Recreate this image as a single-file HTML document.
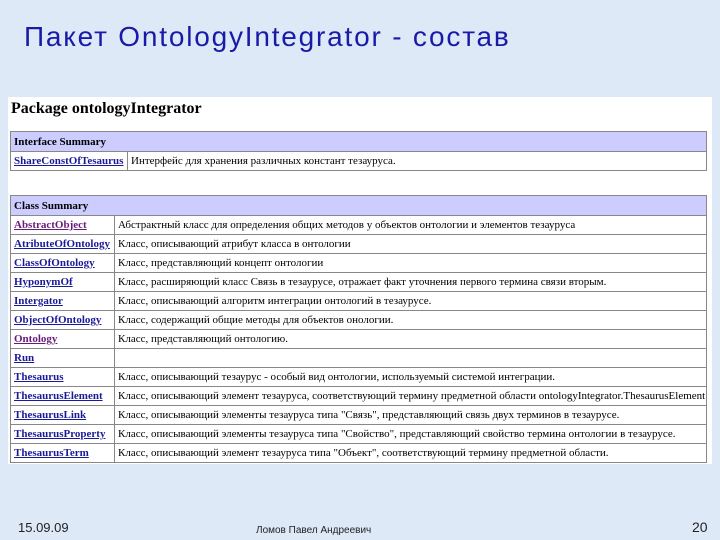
<!DOCTYPE html>
<html><head><meta charset="utf-8"><style>
body{margin:0;width:720px;height:540px;background:#dde9f7;position:relative;overflow:hidden;font-family:"Liberation Serif",serif}
.t{position:absolute;left:24px;top:21px;font:28px "Liberation Sans",sans-serif;letter-spacing:1.8px;color:#1a1aa8;white-space:nowrap}
.box{position:absolute;left:8px;top:97px;width:704px;height:367px;background:#fff}
h1{position:absolute;left:11px;top:100px;margin:0;font-size:16px;font-weight:bold;white-space:nowrap}
table{position:absolute;left:10px;border-collapse:collapse;width:697px;font-size:11px;table-layout:fixed}
td{border:1px solid #888;height:18px;padding:0 3px;white-space:nowrap;overflow:hidden}
th{background:#ccccff;border:1px solid #888;text-align:left;font-weight:bold;height:19px;padding:0 3px;font-size:11px}
a{color:#1a1a99;font-weight:bold;text-decoration:underline}
a.v{color:#6a1a7a}
.f{position:absolute;font:12px "Liberation Sans",sans-serif;color:#222}
</style></head><body>
<div class="t">Пакет OntologyIntegrator - состав</div>
<div class="box"></div>
<h1>Package ontologyIntegrator</h1>
<table style="top:131px"><col style="width:117px"><col><tr><th colspan=2>Interface Summary</th></tr>
<tr><td><a>ShareConstOfTesaurus</a></td><td>Интерфейс для хранения различных констант тезауруса.</td></tr></table>
<table style="top:195px"><col style="width:104px"><col><tr><th colspan=2>Class Summary</th></tr>
<tr><td><a class=v>AbstractObject</a></td><td>Абстрактный класс для определения общих методов у объектов онтологии и элементов тезауруса</td></tr>
<tr><td><a>AtributeOfOntology</a></td><td>Класс, описывающий атрибут класса в онтологии</td></tr>
<tr><td><a>ClassOfOntology</a></td><td>Класс, представляющий концепт онтологии</td></tr>
<tr><td><a>HyponymOf</a></td><td>Класс, расширяющий класс Связь в тезаурусе, отражает факт уточнения первого термина связи вторым.</td></tr>
<tr><td><a>Intergator</a></td><td>Класс, описывающий алгоритм интеграции онтологий в тезаурусе.</td></tr>
<tr><td><a>ObjectOfOntology</a></td><td>Класс, содержащий общие методы для объектов онологии.</td></tr>
<tr><td><a class=v>Ontology</a></td><td>Класс, представляющий онтологию.</td></tr>
<tr><td><a>Run</a></td><td></td></tr>
<tr><td><a>Thesaurus</a></td><td>Класс, описывающий тезаурус - особый вид онтологии, используемый системой интеграции.</td></tr>
<tr><td><a>ThesaurusElement</a></td><td>Класс, описывающий элемент тезауруса, соответствующий термину предметной области ontologyIntegrator.ThesaurusElement</td></tr>
<tr><td><a>ThesaurusLink</a></td><td>Класс, описывающий элементы тезауруса типа "Связь", представляющий связь двух терминов в тезаурусе.</td></tr>
<tr><td><a>ThesaurusProperty</a></td><td>Класс, описывающий элементы тезауруса типа "Свойство", представляющий свойство термина онтологии в тезаурусе.</td></tr>
<tr><td><a>ThesaurusTerm</a></td><td>Класс, описывающий элемент тезауруса типа "Объект", соответствующий термину предметной области.</td></tr>
</table>
<div class="f" style="left:18px;top:520px;font-size:13px">15.09.09</div>
<div class="f" style="left:256px;top:525px;font-size:10px">Ломов Павел Андреевич</div>
<div class="f" style="left:692px;top:519px;font-size:14px">20</div>
</body></html>
